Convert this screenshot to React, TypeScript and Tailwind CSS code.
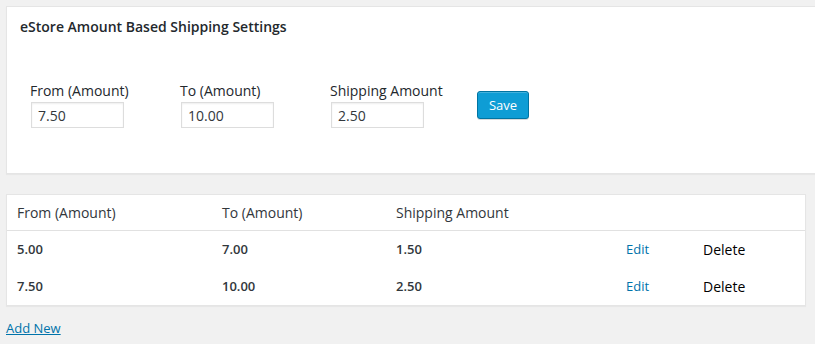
import React from "react";

const rows = [
  { from: "5.00", to: "7.00", amt: "1.50" },
  { from: "7.50", to: "10.00", amt: "2.50" },
];

function Field({ label, value }: { label: string; value: string }) {
  return (
    <div className="flex flex-col w-[150px]">
      <label className="text-[14px] leading-[19px] text-[#23282d] pl-[23px] -mb-[1px]">{label}</label>
      <div className="ml-[24px] mt-[3px] w-[93px] h-[26px] border border-[#dddddd] bg-white shadow-[inset_0_1px_2px_rgba(0,0,0,0.07)] flex items-center px-[6px] text-[14px] text-[#32373c]">
        {value}
      </div>
    </div>
  );
}

export default function App() {
  return (
    <div className="min-h-[344px] w-[815px] bg-[#f1f1f1] pt-[6px] pl-[6px] overflow-hidden" style={{ fontFamily: '"Open Sans", sans-serif' }}>
      <div className="w-[830px] h-[168px] bg-white border border-[#e5e5e5] shadow-[0_1px_1px_rgba(0,0,0,0.04)]">
        <h3 className="text-[14px] font-semibold text-[#23282d] pl-[13px] pt-[10px] leading-[20px]">
          eStore Amount Based Shipping Settings
        </h3>
        <div className="flex items-start mt-[44px]">
          <Field label="From (Amount)" value="7.50" />
          <Field label="To (Amount)" value="10.00" />
          <Field label="Shipping Amount" value="2.50" />
          <button className="ml-[20px] mt-[10px] h-[28px] w-[52px] rounded-[3px] bg-[#0e9dd5] border border-[#0074a2] text-white text-[13px] shadow-[inset_0_1px_0_rgba(120,200,230,0.5),0_1px_0_rgba(0,0,0,0.15)] leading-none">
            Save
          </button>
        </div>
      </div>

      <div className="mt-[20px] w-[800px] bg-white border border-[#e5e5e5] shadow-[0_1px_1px_rgba(0,0,0,0.04)]">
        <div className="grid grid-cols-[205px_174px_230px_77px_1fr] h-[36px] items-center border-b border-[#e1e1e1] text-[14px] text-[#32373c]">
          <div className="pl-[10px]">From (Amount)</div>
          <div className="pl-[10px]">To (Amount)</div>
          <div className="pl-[10px]">Shipping Amount</div>
          <div></div>
          <div></div>
        </div>
        {rows.map((r) => (
          <div key={r.from} className="grid grid-cols-[205px_174px_230px_77px_1fr] h-[37px] items-center text-[13px] text-[#32373c]">
            <div className="pl-[10px] font-semibold">{r.from}</div>
            <div className="pl-[10px] font-semibold">{r.to}</div>
            <div className="pl-[10px] font-semibold">{r.amt}</div>
            <div className="pl-[10px] text-[#0073aa]">Edit</div>
            <div className="pl-[10px] text-[14px] text-black">Delete</div>
          </div>
        ))}
      </div>

      <a className="inline-block mt-[13px] text-[13px] text-[#0073aa] underline">Add New</a>
    </div>
  );
}
